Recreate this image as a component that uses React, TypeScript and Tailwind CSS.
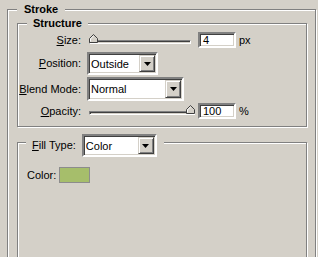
const font = "font-['Liberation_Sans',Arial,sans-serif] text-[11px] text-black";

function Sunken({ className, children }: { className?: string; children?: React.ReactNode }) {
  return (
    <div
      className={`border-2 border-t-[#808080] border-l-[#808080] border-b-white border-r-white bg-white shadow-[inset_1px_1px_0_#404040,inset_-1px_-1px_0_#d4d0c8] ${className ?? ""}`}
    >
      {children}
    </div>
  );
}

function Select({ value, width }: { value: string; width: string }) {
  return (
    <Sunken className={`${width} h-full flex items-stretch`}>
      <div className="flex-1 flex items-center pl-[2px] pt-[1px]">{value}</div>
      <div className="w-[16px] my-[1px] mr-[1px] bg-[#d4d0c8] border border-t-[#d4d0c8] border-l-[#d4d0c8] border-b-[#404040] border-r-[#404040] shadow-[inset_1px_1px_0_#fff,inset_-1px_-1px_0_#808080] flex items-center justify-center">
        <svg width="7" height="4" viewBox="0 0 7 4">
          <path d="M0 0h7L3.5 4z" fill="#000" />
        </svg>
      </div>
    </Sunken>
  );
}

function Slider({ width, thumbRight }: { width: string; thumbRight?: boolean }) {
  return (
    <div className={`relative ${width} h-[16px] flex items-center`}>
      <div className="w-full h-[4px] mt-[3px] border border-t-[#808080] border-l-[#808080] border-b-white border-r-white shadow-[inset_1px_1px_0_#404040]" />
      <svg
        width="9"
        height="9"
        viewBox="0 0 9 9"
        className={`absolute top-[2px] ${thumbRight ? "right-0" : "left-0"}`}
      >
        <path d="M0.5 8.5V4.5L4.5 0.5L8.5 4.5V8.5Z" fill="#d4d0c8" stroke="#404040" />
        <path d="M1.5 7.5V4.9L4.5 1.9" fill="none" stroke="#fff" />
      </svg>
    </div>
  );
}

function Label({ k, rest, className }: { k: string; rest: string; className?: string }) {
  return (
    <span className={className}>
      <u>{k}</u>
      {rest}
    </span>
  );
}

function Group({ className, children }: { className?: string; children?: React.ReactNode }) {
  return (
    <div className={`relative border border-[#808080] shadow-[1px_1px_0_#fff,inset_1px_1px_0_#fff] ${className ?? ""}`}>
      {children}
    </div>
  );
}

export default function App() {
  return (
    <div className={`w-[318px] h-[257px] overflow-hidden bg-[#d4d0c8] ${font} leading-[13px]`}>
      <Group className="mt-[9px] ml-[7px] w-[309px] h-[270px] pt-[13px] pl-[9px]">
        <div className="absolute left-[9px] top-[-7px] px-[7px] bg-[#d4d0c8] font-bold">Stroke</div>

        {/* Structure */}
        <Group className="w-[290px] h-[104px] pt-[8px]">
          <div className="absolute left-[9px] top-[-7px] px-[6px] bg-[#d4d0c8] font-bold">Structure</div>

          <div className="flex items-center h-[16px]">
            <Label k="S" rest="ize:" className="w-[63px] text-right" />
            <Slider width="w-[102px] ml-[8px]" />
            <Sunken className="ml-[7px] w-[38px] h-[16px] flex items-center pl-[3px]">4</Sunken>
            <span className="ml-[3px]">px</span>
          </div>

          <div className="flex items-center h-[23px] mt-[4px]">
            <Label k="P" rest="osition:" className="w-[63px] text-right" />
            <div className="ml-[6px] h-full">
              <Select value="Outside" width="w-[71px]" />
            </div>
          </div>

          <div className="flex items-center h-[24px] mt-[2px]">
            <Label k="B" rest="lend Mode:" className="w-[63px] text-right" />
            <div className="ml-[6px] h-full">
              <Select value="Normal" width="w-[97px]" />
            </div>
          </div>

          <div className="flex items-center h-[16px] mt-[2px]">
            <Label k="O" rest="pacity:" className="w-[63px] text-right" />
            <Slider width="w-[106px] ml-[8px]" thumbRight />
            <Sunken className="ml-[3px] w-[38px] h-[16px] flex items-center pl-[3px]">100</Sunken>
            <span className="ml-[3px]">%</span>
          </div>
        </Group>

        {/* Fill */}
        <Group className="mt-[15px] w-[290px] h-[140px] pt-[24px] pl-[9px]">
          <div className="absolute left-[8px] top-[-9px] h-[23px] pl-[6px] pr-[7px] bg-[#d4d0c8] flex items-center">
            <Label k="F" rest="ill Type:" />
            <div className="ml-[6px] h-full">
              <Select value="Color" width="w-[75px]" />
            </div>
          </div>

          <div className="flex items-center">
            <span className="w-[32px]">Color:</span>
            <div className="w-[31px] h-[16px] bg-[#a6be6b] border border-[#8c8c8c]" />
          </div>
        </Group>
      </Group>
    </div>
  );
}
